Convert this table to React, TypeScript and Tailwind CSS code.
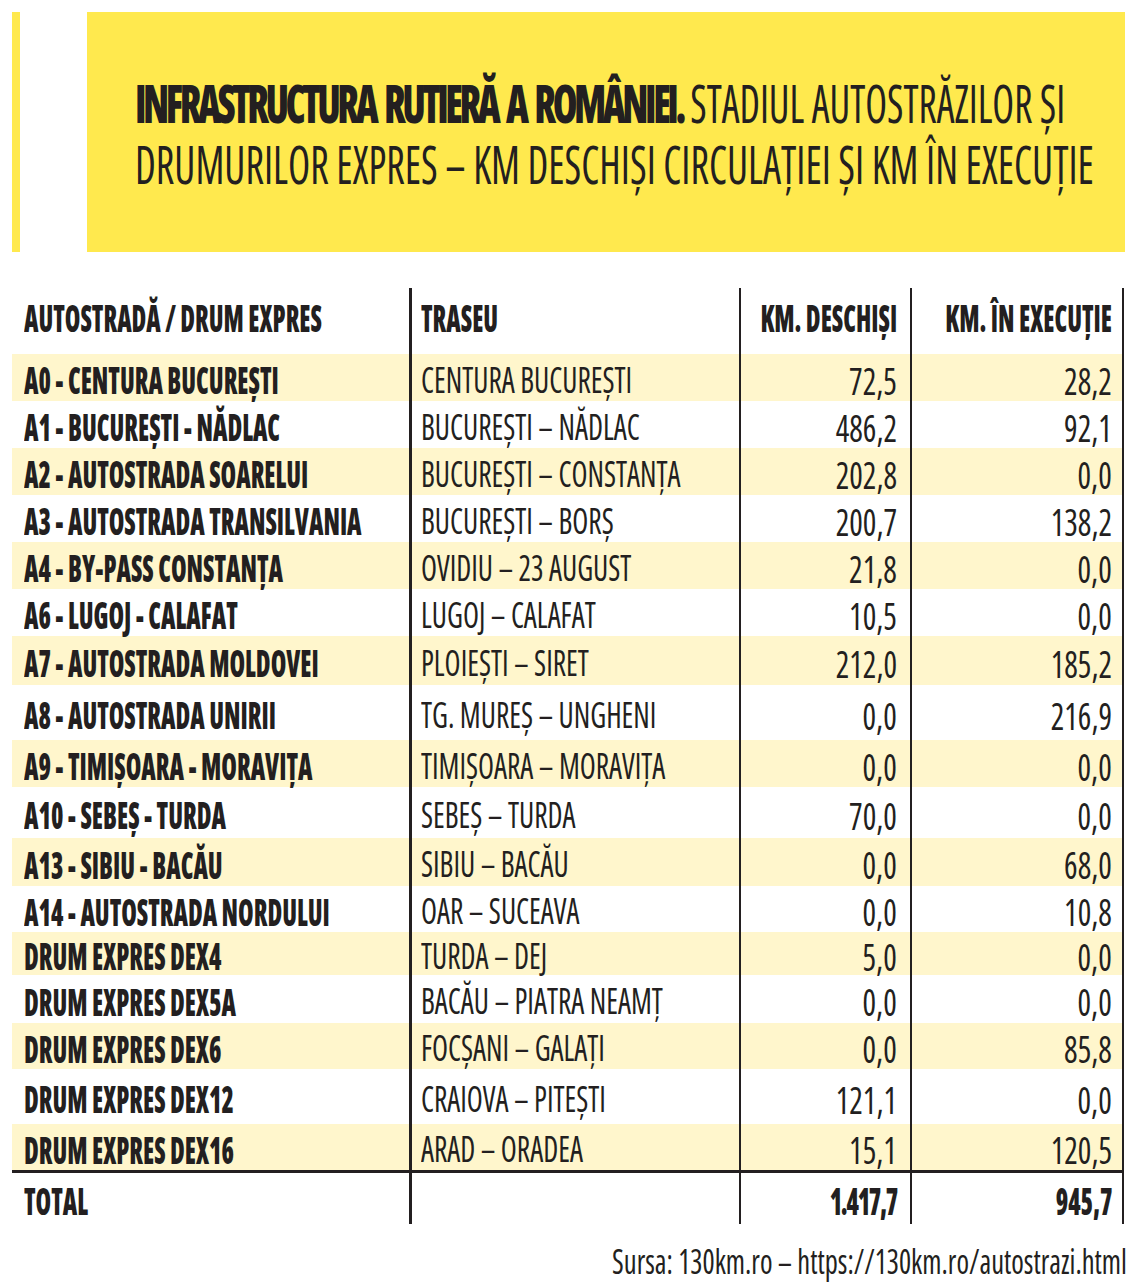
const FB = "font-['Open_Sans',sans-serif] [font-stretch:75%] font-extrabold";
const FR = "font-['Open_Sans',sans-serif] [font-stretch:75%] font-normal";

type Row = { a: string; t: string; d: string; e: string; h: string; y: boolean };

const rows: Row[] = [
  { a: "A0 - CENTURA BUCUREȘTI", t: "CENTURA BUCUREȘTI", d: "72,5", e: "28,2", h: "h-[47px]", y: true },
  { a: "A1 - BUCUREȘTI - NĂDLAC", t: "BUCUREȘTI – NĂDLAC", d: "486,2", e: "92,1", h: "h-[47px]", y: false },
  { a: "A2 - AUTOSTRADA SOARELUI", t: "BUCUREȘTI – CONSTANȚA", d: "202,8", e: "0,0", h: "h-[47px]", y: true },
  { a: "A3 - AUTOSTRADA TRANSILVANIA", t: "BUCUREȘTI – BORȘ", d: "200,7", e: "138,2", h: "h-[47px]", y: false },
  { a: "A4 - BY-PASS CONSTANȚA", t: "OVIDIU – 23 AUGUST", d: "21,8", e: "0,0", h: "h-[47px]", y: true },
  { a: "A6 - LUGOJ - CALAFAT", t: "LUGOJ – CALAFAT", d: "10,5", e: "0,0", h: "h-[47px]", y: false },
  { a: "A7 - AUTOSTRADA MOLDOVEI", t: "PLOIEȘTI – SIRET", d: "212,0", e: "185,2", h: "h-[49px]", y: true },
  { a: "A8 - AUTOSTRADA UNIRII", t: "TG. MUREȘ – UNGHENI", d: "0,0", e: "216,9", h: "h-[55px]", y: false },
  { a: "A9 - TIMIȘOARA - MORAVIȚA", t: "TIMIȘOARA – MORAVIȚA", d: "0,0", e: "0,0", h: "h-[47px]", y: true },
  { a: "A10 - SEBEȘ - TURDA", t: "SEBEȘ – TURDA", d: "70,0", e: "0,0", h: "h-[51px]", y: false },
  { a: "A13 - SIBIU - BACĂU", t: "SIBIU – BACĂU", d: "0,0", e: "68,0", h: "h-[48px]", y: true },
  { a: "A14 - AUTOSTRADA NORDULUI", t: "OAR – SUCEAVA", d: "0,0", e: "10,8", h: "h-[46px]", y: false },
  { a: "DRUM EXPRES DEX4", t: "TURDA – DEJ", d: "5,0", e: "0,0", h: "h-[43px]", y: true },
  { a: "DRUM EXPRES DEX5A", t: "BACĂU – PIATRA NEAMȚ", d: "0,0", e: "0,0", h: "h-[48px]", y: false },
  { a: "DRUM EXPRES DEX6", t: "FOCȘANI – GALAȚI", d: "0,0", e: "85,8", h: "h-[46px]", y: true },
  { a: "DRUM EXPRES DEX12", t: "CRAIOVA – PITEȘTI", d: "121,1", e: "0,0", h: "h-[55px]", y: false },
  { a: "DRUM EXPRES DEX16", t: "ARAD – ORADEA", d: "15,1", e: "120,5", h: "h-[46px]", y: true },
];

function BoldL({ children }: { children: React.ReactNode }) {
  return (
    <span className={"inline-block whitespace-nowrap origin-left scale-x-[0.68] text-[37px] leading-none " + FB}>
      {children}
    </span>
  );
}
function BoldR({ children }: { children: React.ReactNode }) {
  return (
    <span className={"inline-block whitespace-nowrap origin-right scale-x-[0.68] text-[37px] leading-none " + FB}>
      {children}
    </span>
  );
}
function RegL({ children }: { children: React.ReactNode }) {
  return (
    <span className={"inline-block whitespace-nowrap origin-left scale-x-[0.815] text-[36px] leading-none " + FR}>
      {children}
    </span>
  );
}
function Num({ children }: { children: React.ReactNode }) {
  return (
    <span className={"inline-block whitespace-nowrap origin-right scale-x-[0.84] text-[38px] leading-none " + FR}>
      {children}
    </span>
  );
}

function TableRow({
  h,
  bg,
  pad,
  c1,
  c2,
  c3,
  c4,
}: {
  h: string;
  bg: boolean;
  pad: string;
  c1: React.ReactNode;
  c2: React.ReactNode;
  c3: React.ReactNode;
  c4: React.ReactNode;
}) {
  return (
    <div className={"flex w-[1112px] " + h + (bg ? " bg-[#fff6cc]" : "")}>
      <div className={"w-[397px] flex items-center pl-[12px] " + pad}>{c1}</div>
      <div className={"w-[330px] flex items-center pl-[9px] border-l-[3px] border-[#231f20] " + pad}>{c2}</div>
      <div className={"w-[171px] flex items-center justify-end pr-[13px] border-l-2 border-[#231f20] " + pad}>{c3}</div>
      <div className={"w-[214px] flex items-center justify-end pr-[10px] border-l-2 border-r-2 border-[#231f20] " + pad}>{c4}</div>
    </div>
  );
}

export default function App() {
  return (
    <div className="w-[1140px] h-[1287px] bg-white text-[#231f20] overflow-hidden">
      {/* Title band */}
      <div className="flex pt-[12px] pl-[12px]">
        <div className="w-[8px] h-[240px] bg-[#ffe94e]" />
        <div className="ml-[67px] w-[1038px] h-[240px] bg-[#ffe94e] pl-[48px] pt-[60px] flex flex-col">
          <div className="h-[61px] flex items-start">
            <span className="inline-block whitespace-nowrap origin-left scale-x-[0.755] text-[53px] leading-[61px] font-['Open_Sans',sans-serif] [font-stretch:75%]">
              <span className="font-extrabold tracking-[-0.087em] [word-spacing:0.13em]">INFRASTRUCTURA RUTIERĂ A ROMÂNIEI.</span>
              <span className="font-normal"> STADIUL AUTOSTRĂZILOR ȘI</span>
            </span>
          </div>
          <div className="h-[61px] flex items-start">
            <span className="inline-block whitespace-nowrap origin-left scale-x-[0.768] text-[53px] leading-[61px] font-['Open_Sans',sans-serif] [font-stretch:75%] font-normal">
              DRUMURILOR EXPRES – KM DESCHIȘI CIRCULAȚIEI ȘI KM ÎN EXECUȚIE
            </span>
          </div>
        </div>
      </div>

      {/* Table */}
      <div className="mt-[36px] ml-[12px] flex flex-col w-[1112px]">
        <TableRow
          h="h-[66px]"
          bg={false}
          pad="pb-[8px]"
          c1={<BoldL>AUTOSTRADĂ / DRUM EXPRES</BoldL>}
          c2={<BoldL>TRASEU</BoldL>}
          c3={<BoldR>KM. DESCHIȘI</BoldR>}
          c4={<BoldR>KM. ÎN EXECUȚIE</BoldR>}
        />
        {rows.map((r, i) => (
          <TableRow
            key={i}
            h={r.h}
            bg={r.y}
            pad="pt-[4px]"
            c1={<BoldL>{r.a}</BoldL>}
            c2={<RegL>{r.t}</RegL>}
            c3={<Num>{r.d}</Num>}
            c4={<Num>{r.e}</Num>}
          />
        ))}
        <div className="h-[3px] w-[1112px] bg-[#231f20]" />
        <TableRow
          h="h-[51px]"
          bg={false}
          pad="pt-[4px]"
          c1={<BoldL>TOTAL</BoldL>}
          c2={<span />}
          c3={
            <span className={"inline-block whitespace-nowrap origin-right scale-x-[0.68] text-[37px] leading-none tracking-[-0.05em] " + FB}>
              1.417,7
            </span>
          }
          c4={<BoldR>945,7</BoldR>}
        />
      </div>

      {/* Source */}
      <div className="mt-[20px] w-[1127px] flex justify-end">
        <span className={"inline-block whitespace-nowrap origin-right scale-x-[0.84] text-[34px] leading-none " + FR}>
          Sursa: 130km.ro – https://130km.ro/autostrazi.html
        </span>
      </div>
    </div>
  );
}
